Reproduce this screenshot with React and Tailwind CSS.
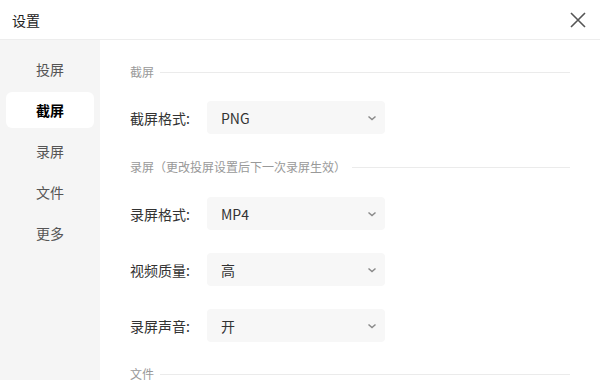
import { useState } from 'react';

const font = { fontFamily: '"Noto Sans CJK SC", "Noto Sans", sans-serif' };

function SectionTitle({ title, className = '' }) {
  return (
    <div className={`flex items-center h-5 ${className}`}>
      <span className="text-xs text-[#999] whitespace-nowrap">{title}</span>
      <div className="flex-1 h-px bg-[#ebebeb] ml-[6px]" />
    </div>
  );
}

function SelectRow({ label, value, className = '' }) {
  return (
    <div className={`flex items-center ${className}`}>
      <span className="w-[77px] text-sm text-[#333]">{label}</span>
      <div className="w-[178px] h-[33px] bg-[#f7f7f7] rounded-[4px] flex items-center justify-between pl-[14px] pr-[8px]">
        <span className="text-sm text-[#333]">{value}</span>
        <svg width="10" height="10" viewBox="0 0 10 10" fill="none">
          <path d="M1.5 3.5 L5 6.5 L8.5 3.5" stroke="#8a8a8a" strokeWidth="1.5" />
        </svg>
      </div>
    </div>
  );
}

export default function App() {
  const [active, setActive] = useState('截屏');
  const tabs = ['投屏', '截屏', '录屏', '文件', '更多'];

  return (
    <div className="w-[600px] h-[380px] bg-white flex flex-col overflow-hidden" style={font}>
      <div className="h-10 flex items-center justify-between pl-3 pr-3 border-b border-[#ededed] shrink-0">
        <span className="text-sm text-[#222]">设置</span>
        <svg width="18" height="18" viewBox="0 0 18 18" fill="none" className="mr-[1px]">
          <path d="M2 2 L16 16 M16 2 L2 16" stroke="#555" strokeWidth="1.6" />
        </svg>
      </div>
      <div className="flex flex-1 min-h-0">
        <div className="w-[100px] bg-[#f5f5f5] pt-[11px] flex flex-col gap-[5px] px-[6px]">
          {tabs.map((t) => (
            <button
              key={t}
              onClick={() => setActive(t)}
              className={`h-9 rounded-[6px] text-sm ${
                active === t ? 'bg-white text-black font-bold' : 'text-[#555]'
              }`}
            >
              {t}
            </button>
          ))}
        </div>
        <div className="flex-1 pl-[30px] pr-[30px] pt-[22px]">
          <SectionTitle title="截屏" />
          <SelectRow label="截屏格式:" value="PNG" className="mt-[19px]" />
          <SectionTitle title="录屏（更改投屏设置后下一次录屏生效）" className="mt-[23px]" />
          <SelectRow label="录屏格式:" value="MP4" className="mt-[20px]" />
          <SelectRow label="视频质量:" value="高" className="mt-[23px]" />
          <SelectRow label="录屏声音:" value="开" className="mt-[23px]" />
          <SectionTitle title="文件" className="mt-[22px]" />
        </div>
      </div>
    </div>
  );
}
